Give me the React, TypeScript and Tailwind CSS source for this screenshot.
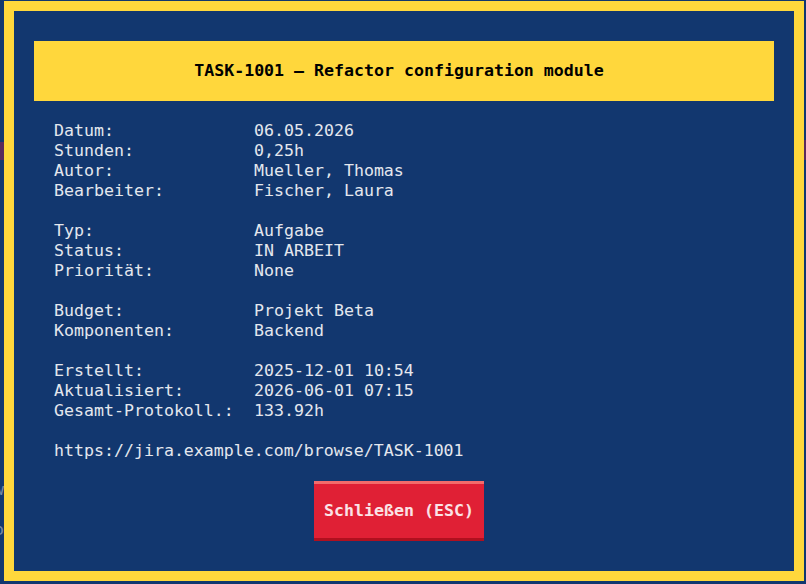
import React from "react";

const rows: ([string, string] | null)[] = [
  ["Datum:", "06.05.2026"],
  ["Stunden:", "0,25h"],
  ["Autor:", "Mueller, Thomas"],
  ["Bearbeiter:", "Fischer, Laura"],
  null,
  ["Typ:", "Aufgabe"],
  ["Status:", "IN ARBEIT"],
  ["Priorität:", "None"],
  null,
  ["Budget:", "Projekt Beta"],
  ["Komponenten:", "Backend"],
  null,
  ["Erstellt:", "2025-12-01 10:54"],
  ["Aktualisiert:", "2026-06-01 07:15"],
  ["Gesamt-Protokoll.:", "133.92h"],
  null,
];

export default function App() {
  return (
    <div
      className="relative w-[806px] h-[584px] bg-[#12376f] overflow-hidden pt-[1px] pl-[4px]"
      style={{ fontFamily: '"DejaVu Sans Mono", "Liberation Mono", monospace' }}
    >
      {/* backdrop remnants */}
      <div className="absolute left-0 top-[142px] w-[4px] h-[18px] bg-[#5a2a5c]" />
      <div className="absolute right-0 top-[140px] w-[2px] h-[20px] bg-[#5a2a5c]" />
      <div className="absolute left-[-6px] top-[480px] text-[16.6px] leading-[20px] text-[#7a8aa6]">w</div>
      <div className="absolute left-[-6px] top-[520px] text-[16.6px] leading-[20px] text-[#7a8aa6]">o</div>

      <div className="relative w-[800px] h-[580px] border-[10px] border-[#ffd73c] bg-[#12376f] px-[20px] pt-[30px]">
        <div className="h-[60px] bg-[#ffd73c] flex items-center justify-center pr-[10px] text-black font-bold text-[16.6px] leading-[20px]">
          TASK-1001 — Refactor configuration module
        </div>
        <div className="pt-[20px] pl-[20px] text-[#e4e7ee] text-[16.6px] leading-[20px]">
          {rows.map((r, i) =>
            r ? (
              <div key={i} className="flex h-[20px] whitespace-pre">
                <span className="w-[200px]">{r[0]}</span>
                <span>{r[1]}</span>
              </div>
            ) : (
              <div key={i} className="h-[20px]" />
            )
          )}
          <div className="h-[20px] whitespace-pre">https://jira.example.com/browse/TASK-1001</div>
        </div>
        <div className="flex justify-center pt-[20px] pr-[10px]">
          <div className="w-[170px] h-[60px] bg-[#e02035] border-t-[3px] border-t-[#f26b6b] border-b-[3px] border-b-[#b0101f] flex items-center justify-center text-[#fbe3e6] font-bold text-[16.6px] leading-[20px]">
            Schließen (ESC)
          </div>
        </div>
      </div>
    </div>
  );
}
